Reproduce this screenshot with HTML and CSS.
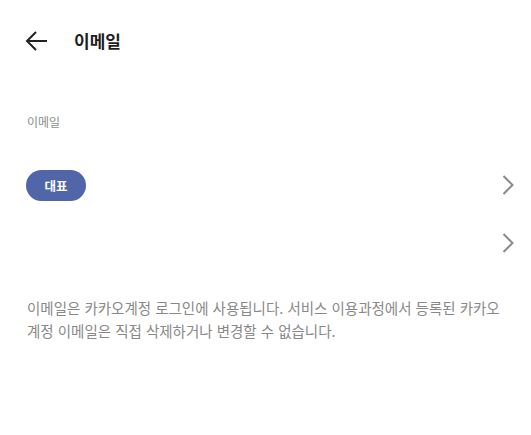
FILE: index.html
```html
<!DOCTYPE html>
<html lang="ko">
<head>
<meta charset="utf-8">
<link rel="stylesheet" href="styles.css">
</head>
<body>
<div class="page">
  <header class="header">
    <svg class="back" width="22" height="20" viewBox="0 0 22 20" fill="none" stroke="#222" stroke-width="2" stroke-linecap="butt" stroke-linejoin="miter">
      <path d="M11 1 L2 10 L11 19"/>
      <path d="M2 10 H22"/>
    </svg>
    <h1 class="title">이메일</h1>
  </header>
  <div class="label">이메일</div>
  <div class="row">
    <span class="badge">대표</span>
    <svg class="chev" width="12" height="20" viewBox="0 0 12 20" fill="none" stroke="#8a8a8a" stroke-width="2"><path d="M1.5 1 L10.5 10 L1.5 19"/></svg>
  </div>
  <div class="row">
    <span></span>
    <svg class="chev" width="12" height="20" viewBox="0 0 12 20" fill="none" stroke="#8a8a8a" stroke-width="2"><path d="M1.5 1 L10.5 10 L1.5 19"/></svg>
  </div>
  <p class="note">이메일은 카카오계정 로그인에 사용됩니다. 서비스 이용과정에서 등록된 카카오계정 이메일은 직접 삭제하거나 변경할 수 없습니다.</p>
</div>
</body>
</html>
```
FILE: styles.css
```css
html, body {
  margin: 0;
  padding: 0;
  background: #fff;
}
body {
  font-family: "Noto Sans CJK KR", "Noto Sans", sans-serif;
  color: #222;
}
.page {
  width: 531px;
}
.header {
  height: 82px;
  display: flex;
  align-items: center;
  padding-left: 25px;
  gap: 27px;
}
.back {
  display: block;
}
.title {
  margin: 0;
  font-size: 17px;
  font-weight: 700;
  color: #1e1e1e;
  line-height: 24px;
}
.label {
  margin-top: 31px;
  padding-left: 27px;
  font-size: 12px;
  line-height: 18px;
  color: #8c8c8c;
}
.row {
  height: 58px;
  display: flex;
  align-items: center;
  justify-content: space-between;
  padding: 0 17px 0 26px;
}
.label + .row {
  margin-top: 25px;
}
.badge {
  width: 60px;
  height: 31px;
  border-radius: 16px;
  background: #5066a8;
  color: #fff;
  font-size: 12.5px;
  font-weight: 700;
  display: flex;
  align-items: center;
  justify-content: center;
}
.chev {
  display: block;
}
.note {
  margin: 24px 0 0;
  padding: 0 20px 0 27px;
  font-size: 14.5px;
  line-height: 23px;
  color: #888;
}
```
